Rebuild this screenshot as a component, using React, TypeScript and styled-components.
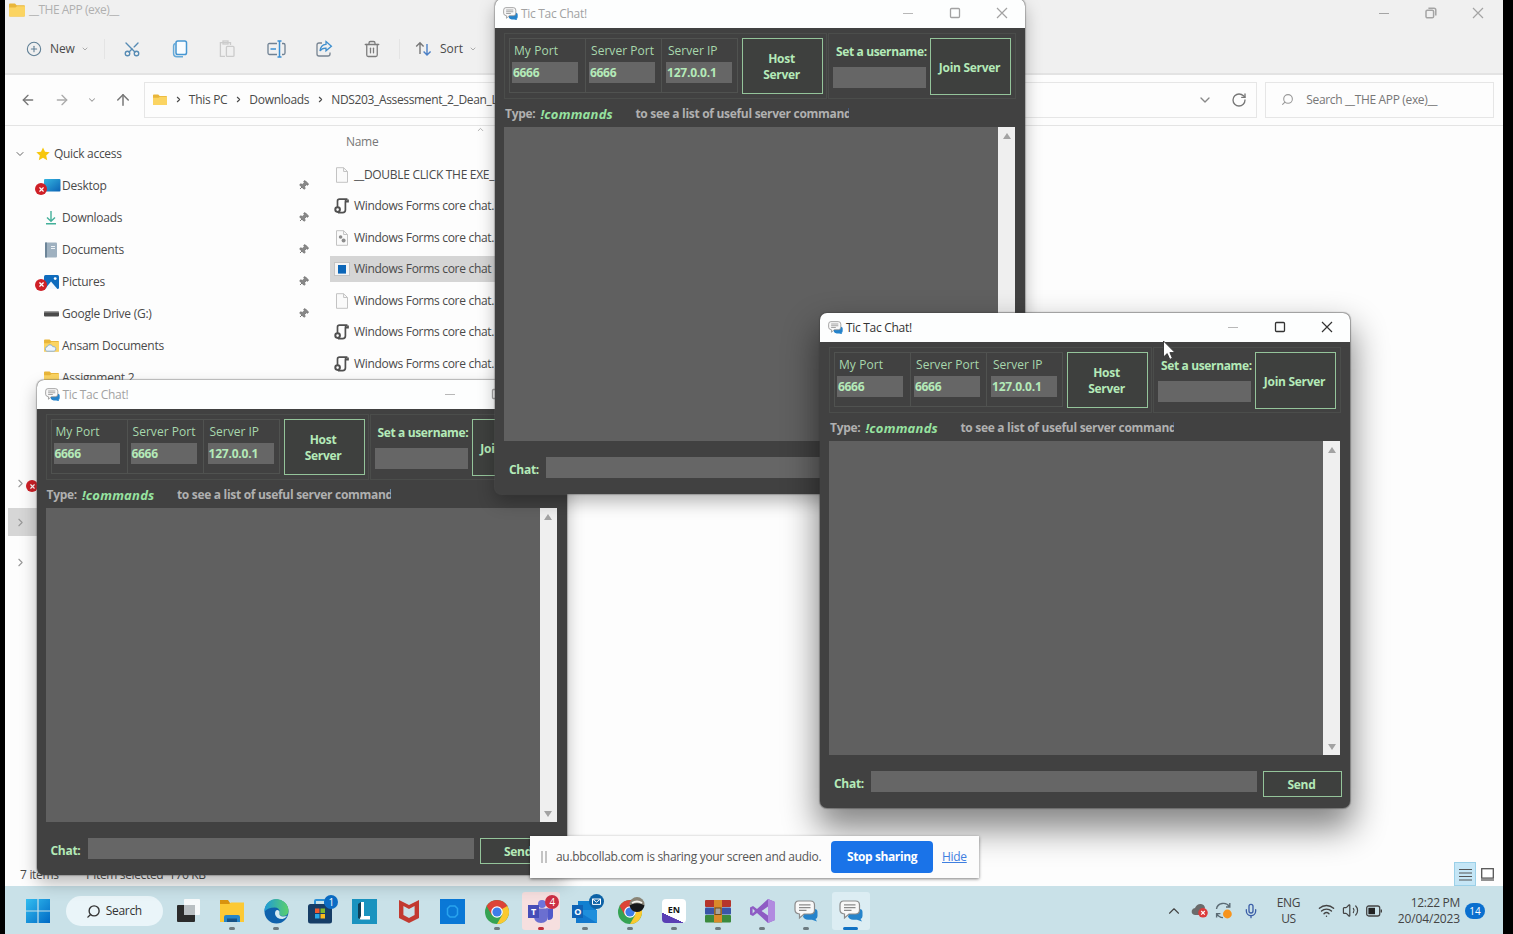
import React from 'react';
import styled, { createGlobalStyle, css } from 'styled-components';
import {
  ArrowLeft, ArrowRight, ArrowUp, ChevronDown, ChevronRight, ChevronUp, CirclePlus, Scissors,
  Trash2, RotateCw, Search, Mic, Wifi, Volume2, X, Pin,
} from 'lucide-react';

const Global = createGlobalStyle`
  *, *::before, *::after { box-sizing: border-box; }
  html, body { margin: 0; padding: 0; overflow: hidden; }
  body { font-family: "Open Sans", "Noto Sans", sans-serif; font-size: 12px; color: #4a4a4a; }
  svg { display: block; flex: none; }
`;

const Screen = styled.div`
  position: relative;
  width: 1513px;
  height: 934px;
  overflow: hidden;
  background: #000;
  padding: 0 10px 0 5px;
  display: flex;
  flex-direction: column;
`;

const Text = styled.span<{ $ls?: number; $size?: number; $color?: string; $bold?: boolean; $italic?: boolean }>`
  white-space: pre;
  line-height: 16px;
  letter-spacing: ${p => p.$ls ?? -0.3}px;
  font-size: ${p => p.$size ?? 12}px;
  font-weight: ${p => (p.$bold ? 700 : 400)};
  font-style: ${p => (p.$italic ? 'italic' : 'normal')};
  ${p => p.$color && css`color: ${p.$color};`}
`;

/* ---------- File explorer ---------- */

const Explorer = styled.section`
  flex: 1;
  min-height: 0;
  background: #fdfdfd;
  display: flex;
  flex-direction: column;
`;

const ExplorerTop = styled.header`
  height: 75px;
  background: #f0f0f0;
  border-bottom: 2px solid #e3e3e3;
  display: flex;
  flex-direction: column;
`;

const ExplorerTitle = styled.div`
  height: 24px;
  display: flex;
  align-items: center;
  padding: 0 19px 4px 4px;
  gap: 4px;
`;

const Caption = styled.div`
  margin-left: auto;
  display: flex;
  align-items: center;
  gap: 35px;
  padding-top: 5px;
`;

const CaptionMark = styled.div`
  color: #a4a4a4;
`;

const Toolbar = styled.div`
  height: 49px;
  display: flex;
  align-items: center;
  padding-left: 21px;
`;

const ToolItem = styled.div<{ $w: number; $ml?: number }>`
  width: ${p => p.$w}px;
  margin-left: ${p => p.$ml ?? 0}px;
  display: flex;
  align-items: center;
`;

const Divider = styled.div`
  width: 1px;
  height: 20px;
  background: #e4e4e4;
`;

const UprightScissors = styled(Scissors)`
  transform: rotate(-90deg);
`;

const MirroredSearch = styled(Search)`
  transform: scaleX(-1);
`;

const AddressRow = styled.div`
  height: 51px;
  border-bottom: 1px solid #e4e4e4;
  display: flex;
  align-items: center;
  padding: 0 9px 1px 15px;
`;

const NavItem = styled.div<{ $w: number }>`
  width: ${p => p.$w}px;
  display: flex;
`;

const AddressBox = styled.div`
  width: 1115px;
  height: 36px;
  border: 1px solid #e6e6e6;
  display: flex;
  align-items: center;
  padding: 0 9px 0 8px;
`;

const Crumb = styled.div<{ $ml: number }>`
  margin-left: ${p => p.$ml}px;
  display: flex;
`;

const AddressTools = styled.div`
  margin-left: auto;
  display: flex;
  align-items: center;
  gap: 18px;
`;

const SearchBox = styled.div`
  margin-left: 8px;
  width: 229px;
  height: 36px;
  border: 1px solid #e6e6e6;
  display: flex;
  align-items: center;
  padding-left: 15px;
  gap: 12px;
`;

const Main = styled.div`
  flex: 1;
  min-height: 0;
  display: flex;
`;

const Sidebar = styled.nav`
  width: 325px;
  padding-top: 11px;
  display: flex;
  flex-direction: column;
`;

const SideRow = styled.div<{ $indent: number }>`
  height: 32px;
  flex: none;
  display: flex;
  align-items: center;
  padding: 1px 21px 0 ${p => p.$indent}px;
`;

const SideIcon = styled.div`
  position: relative;
  width: 18px;
`;

const ErrorDot = styled.i`
  position: absolute;
  left: -9px;
  top: 4px;
  width: 12px;
  height: 12px;
  border-radius: 50%;
  background: #cf2027;
  display: flex;
  align-items: center;
  justify-content: center;
  color: #fff;
`;

const PinSlot = styled.div`
  margin-left: auto;
  transform: rotate(45deg);
  color: #777;
`;

const TreeRow = styled.div<{ $mt: number; $active?: boolean }>`
  position: relative;
  flex: none;
  height: 28px;
  margin: ${p => p.$mt}px 0 0 3px;
  padding-left: 6px;
  display: flex;
  align-items: center;
  color: #999;
  background: ${p => (p.$active ? '#d6d6d6' : 'transparent')};
`;

const TreeError = styled(ErrorDot)`
  left: 18px;
  top: 11px;
`;

const FileList = styled.div`
  width: 400px;
  display: flex;
  flex-direction: column;
`;

const ColumnHead = styled.div`
  height: 36px;
  padding: 8px 0 0 16px;
  display: flex;
  color: #777;
`;

const SortMark = styled.div`
  margin: -9px 0 0 98px;
  color: #999;
`;

const FileRow = styled.div<{ $active?: boolean }>`
  height: 26px;
  margin-bottom: 5.45px;
  flex: none;
  display: flex;
  align-items: center;
  gap: 4px;
  padding-left: 4px;
  background: ${p => (p.$active ? '#d5d5d5' : 'transparent')};
`;

const StatusBar = styled.footer`
  height: 24px;
  display: flex;
  align-items: center;
  padding: 2px 9px 0 15px;
`;

const ViewButtons = styled.div`
  margin: -2px 0 0 auto;
  display: flex;
  align-items: center;
  gap: 5px;
`;

const ViewActive = styled.div`
  width: 22px;
  height: 24px;
  border: 1px solid #9bd0e8;
  background: #c5e6f6;
  display: flex;
  align-items: center;
  justify-content: center;
`;

/* ---------- Chat windows ---------- */

const WindowFrame = styled.section<{ $x: number; $y: number; $active?: boolean }>`
  position: absolute;
  left: ${p => p.$x}px;
  top: ${p => p.$y}px;
  width: 530px;
  height: 495px;
  border-radius: 7px;
  overflow: hidden;
  background: #414141;
  display: flex;
  flex-direction: column;
  box-shadow: ${p => (p.$active
    ? '0 0 1px 1px rgba(60,60,60,.45), 0 18px 34px 3px rgba(0,0,0,.48)'
    : '0 0 1px 1px rgba(90,90,90,.4), 0 8px 17px rgba(0,0,0,.28)')};
`;

const TitleBar = styled.header<{ $active?: boolean }>`
  height: 29px;
  flex: none;
  background: #fdfefe;
  display: flex;
  align-items: center;
  padding: 0 17px 0 8px;
  gap: 3px;
  color: ${p => (p.$active ? '#333' : '#a2a2a2')};
`;

const TitleButtons = styled.div`
  margin-left: auto;
  padding-bottom: 1px;
  display: flex;
  align-items: center;
  gap: 35px;
`;

const Groups = styled.div`
  height: 66px;
  margin: 5px 9px 0;
  display: flex;
  gap: 1px;
`;

const Group = styled.div<{ $w: number }>`
  width: ${p => p.$w}px;
  flex: none;
  border: 1px solid #4b4d4b;
  padding: 4px 0 4px 4px;
  display: flex;
`;

const Cell = styled.div<{ $pl: number; $last?: boolean }>`
  width: ${p => (p.$last ? 77 : 76)}px;
  flex: none;
  height: 55px;
  border: 1px solid #505250;
  border-right-width: ${p => (p.$last ? 1 : 0)}px;
  padding: 4px 0 0 ${p => p.$pl}px;
  display: flex;
  flex-direction: column;
  color: #a8d8ad;
`;

const Field = styled.div<{ $w: number }>`
  width: ${p => p.$w}px;
  height: 21px;
  background: #666;
  display: flex;
  align-items: center;
  padding-left: 1px;
  color: #b4eab8;
`;

const PortField = styled(Field)`
  margin: 3px 0 0 -2px;
`;

const OutlineButton = styled.div<{ $w: number; $h: number }>`
  width: ${p => p.$w}px;
  height: ${p => p.$h}px;
  flex: none;
  border: 1px solid #94c49a;
  display: flex;
  flex-direction: column;
  align-items: center;
  justify-content: center;
  padding: 1px 2px 0 0;
  color: #b4eab8;
  background: #3e403e;
`;

const JoinButton = styled(OutlineButton)`
  padding-top: 3px;
`;

const HostSlot = styled.div`
  margin-left: 4px;
`;

const UserColumn = styled.div`
  width: 97px;
  flex: none;
  padding-top: 6px;
  display: flex;
  flex-direction: column;
  color: #b4eab8;
`;

const UserField = styled(Field)`
  margin-top: 7px;
`;

const UserLabel = styled.div`
  height: 16px;
  padding-left: 3px;
  display: flex;
`;

const HintRow = styled.div`
  height: 28px;
  padding: 7px 0 0 10px;
  display: flex;
  color: #b0b0b0;
`;

const HintCommand = styled.div`
  margin-left: 5px;
  width: 95px;
  display: flex;
  color: #97e3a0;
`;

const HintClip = styled.div`
  width: 214px;
  height: 18px;
  overflow: hidden;
  display: flex;
`;

const Log = styled.div`
  height: 314px;
  margin: 0 10px 0 9px;
  background: #606060;
  display: flex;
  justify-content: flex-end;
`;

const ScrollTrack = styled.div`
  width: 17px;
  background: #efefef;
  display: flex;
  flex-direction: column;
  align-items: center;
  justify-content: space-between;
  padding: 6px 0 5px;
`;

const ChatRow = styled.div`
  height: 26px;
  margin: 16px 0 0 14px;
  display: flex;
  color: #b4eab8;
`;

const ChatLabel = styled.div`
  width: 37px;
  padding-top: 5px;
  display: flex;
`;

const SendSlot = styled.div`
  margin-left: 6px;
`;

const MouseSlot = styled.div`
  position: absolute;
  left: 1162px;
  top: 340px;
`;

/* ---------- Sharing bar ---------- */

const ShareBar = styled.aside`
  position: absolute;
  left: 530px;
  top: 836px;
  width: 449px;
  height: 42px;
  background: #fcfcfc;
  box-shadow: 0 1px 3px rgba(0, 0, 0, 0.5);
  display: flex;
  align-items: center;
  padding-left: 11px;
`;

const Grip = styled.div`
  width: 6px;
  height: 12px;
  margin-right: 9px;
  border: solid #c4c4c4;
  border-width: 0 2px;
`;

const ShareText = styled.div`
  width: 275px;
  display: flex;
  color: #555;
`;

const StopButton = styled.div`
  width: 102px;
  height: 32px;
  border-radius: 4px;
  background: #1a73e8;
  color: #fff;
  display: flex;
  align-items: center;
  justify-content: center;
`;

const HideLink = styled.div`
  margin-left: 9px;
  display: flex;
  color: #3f7fe0;
  text-decoration: underline;
`;

/* ---------- Taskbar ---------- */

const Taskbar = styled.footer`
  height: 48px;
  flex: none;
  background: #c9e1e8;
  display: flex;
  align-items: center;
  padding: 0 18px 0 11px;
`;

const TaskItem = styled.div`
  position: relative;
  width: 44.2px;
  height: 48px;
  display: flex;
  align-items: center;
  justify-content: center;
  padding-top: 2px;
`;

const TaskTile = styled.div<{ $bg?: string }>`
  width: 38px;
  height: 38px;
  border-radius: 3px;
  background: ${p => p.$bg ?? 'transparent'};
  display: flex;
  align-items: center;
  justify-content: center;
`;

const Running = styled.i<{ $color?: string; $w?: number }>`
  position: absolute;
  bottom: 4px;
  left: calc(50% - ${p => (p.$w ?? 6) / 2}px);
  width: ${p => p.$w ?? 6}px;
  height: 3px;
  border-radius: 2px;
  background: ${p => p.$color ?? '#6d7b80'};
`;

const TaskBadge = styled.b<{ $bg: string }>`
  position: absolute;
  right: 4px;
  top: 9px;
  width: 14px;
  height: 14px;
  border-radius: 50%;
  background: ${p => p.$bg};
  color: #fff;
  font-size: 10px;
  font-weight: 400;
  line-height: 14px;
  text-align: center;
`;

const SearchPill = styled.div`
  width: 97px;
  height: 30px;
  margin: 2px 3px 0 5.5px;
  border-radius: 15px;
  background: #eaf5f9;
  display: flex;
  align-items: center;
  padding-left: 20px;
  gap: 5px;
  color: #333;
`;

const Tray = styled.div`
  margin-left: auto;
  display: flex;
  align-items: center;
  padding-top: 1px;
  color: #444;
`;

const TrayItem = styled.div<{ $w: number }>`
  width: ${p => p.$w}px;
  display: flex;
`;

const Stack = styled.div<{ $w: number; $align: string; $ml?: number }>`
  width: ${p => p.$w}px;
  margin-left: ${p => p.$ml ?? 0}px;
  display: flex;
  flex-direction: column;
  align-items: ${p => p.$align};
`;

const CountDot = styled.div`
  width: 20px;
  height: 16px;
  margin-left: 5px;
  border-radius: 8px;
  background: #0a6fcf;
  color: #fff;
  font-size: 10px;
  line-height: 16px;
  text-align: center;
`;

/* ---------- Drawings ---------- */

const Folder = ({ w = 16, cloud = false }: { w?: number; cloud?: boolean }) => (
  <svg width={w} height={w * 0.85} viewBox="0 0 16 13.6">
    <path d="M0 1.5Q0 .5 1 .5H6L7.6 2.2H15Q16 2.2 16 3.2V12.4Q16 13.4 15 13.4H1Q0 13.4 0 12.4Z" fill="#e9b63a" />
    <path d="M0 4.4H6.4L8 3.2H16V12.4Q16 13.4 15 13.4H1Q0 13.4 0 12.4Z" fill="#fbd462" />
    {cloud && <path d="M3 13a2.5 2.5 0 0 1 .4-4.8 3.2 3.2 0 0 1 6 0 2.4 2.4 0 0 1 1.4 4.8Z" fill="#eef4fb" stroke="#7aa7d8" strokeWidth=".9" />}
  </svg>
);

const ChatIcon = ({ size = 15 }: { size?: number }) => (
  <svg width={size} height={size * 0.9} viewBox="0 0 24 21.6">
    <path d="M12 9h8.5q3 0 3 3v4q0 2.4-2 3l1.5 2.4-5-1.6h-4q-4-.4-5-3.4z" fill="#2583cb" />
    <path d="M4.5 1H16.5q4 0 4 4v5q0 4-4 4H10l-4.500 4V14q-4.500-.5-4.500-4V5q0-4 3.500-4Z" fill="#f8f8f8" stroke="#8b8b8b" strokeWidth="1.2" />
    <path d="M5 4.8H16.5M5 7.6H16.5M5 10.4H12.5" stroke="#8a8a8a" strokeWidth="1.2" />
  </svg>
);

const MinMark = ({ light }: { light?: boolean }) => (
  <svg width="12" height="12" viewBox="0 0 12 12"><path d="M1 6.5H11" stroke={light ? '#b8b8b8' : 'currentColor'} /></svg>
);
const MaxMark = () => (
  <svg width="12" height="12" viewBox="0 0 12 12"><rect x="1.5" y="1.5" width="9" height="9" rx="1" fill="none" stroke="currentColor" strokeWidth="1.3" /></svg>
);
const CloseMark = () => (
  <svg width="12" height="12" viewBox="0 0 12 12"><path d="M1 1L11 11M11 1L1 11" stroke="currentColor" strokeWidth="1.2" /></svg>
);
const RestoreMark = () => (
  <svg width="12" height="12" viewBox="0 0 12 12" fill="none" stroke="currentColor" strokeWidth="1.5"><rect x="1" y="3.2" width="7.6" height="7.6" rx="1.4" /><path d="M3.4 1.2H9q1.8 0 1.8 1.8V8.6" /></svg>
);

const CopyIcon = () => (
  <svg width="16" height="18" viewBox="0 0 16 18" fill="none" stroke="#4596d2" strokeWidth="1.5"><rect x="4" y="1" width="10.5" height="13.5" rx="1.8" fill="#f8fcff" /><path d="M4 3.4Q1.6 3.6 1.6 6V13.6Q1.6 16.8 5 16.8H11" stroke="#65a9d8" /></svg>
);
const PasteIcon = () => (
  <svg width="16" height="18" viewBox="0 0 16 18" fill="none" stroke="#cbcbcb" strokeWidth="1.3"><path d="M6 16.3H1.4V2.6H11.5V5" /><rect x="4" y="1" width="5" height="3" /><rect x="7.4" y="6.4" width="7.6" height="10" rx="1" /></svg>
);
const RenameIcon = () => (
  <svg width="19" height="18" viewBox="0 0 19 18" fill="none" stroke="#6f8193" strokeWidth="1.3"><path d="M10 3.5H2.5Q1 3.5 1 5V13Q1 14.5 2.5 14.5H10M15 3.5H16.5Q18 3.5 18 5V13Q18 14.5 16.5 14.5H15" /><path d="M3.5 9H9M12.5 1V17M10.5 1H14.5M10.5 17H14.5" stroke="#3b8fd2" strokeWidth="1.5" /></svg>
);
const ShareIcon = () => (
  <svg width="18" height="18" viewBox="0 0 18 18" fill="none" strokeWidth="1.3"><path d="M7 3H4Q2 3 2 5V14Q2 16 4 16H13Q15 16 15 14V12.5" stroke="#778491" /><path d="M11 1.6L16.4 6.2L11 10.8V8.2Q7 8 5 11Q5.6 4.8 11 4.4Z" stroke="#3f8fce" /></svg>
);
const SortIcon = () => (
  <svg width="17" height="16" viewBox="0 0 17 16" fill="none" strokeWidth="1.4"><path d="M5 13V2M1.2 5.6L5 1.8L8.6 5.6" stroke="#777" /><path d="M12 3V14M8.6 10.4L12 14L15.6 10.4" stroke="#4c80c6" /></svg>
);

const DesktopIcon = () => (<svg width="17" height="13" viewBox="0 0 17 13"><defs><linearGradient id="dk" x1="0" x2="1" y2="1"><stop stopColor="#35b6e0" /><stop offset="1" stopColor="#0b62b5" /></linearGradient></defs><rect width="16.5" height="12.5" rx="1" fill="url(#dk)" /></svg>);
const DownloadIcon = () => (<svg width="14" height="15" viewBox="0 0 14 15" fill="none" stroke="#44b09a" strokeWidth="1.4"><path d="M7 1V11M3 7.4L7 11.2L11 7.4M2 13.7H12" /></svg>);
const DocumentIcon = () => (<svg width="14" height="16" viewBox="0 0 14 16"><rect x="1" y=".5" width="12" height="15" rx="1" fill="#9fb1c0" /><path d="M2 .5V15.5" stroke="#6d8598" strokeWidth="2" /><path d="M7 4.5H11M7 6.5H11" stroke="#eef3f7" /></svg>);
const PictureIcon = () => (<svg width="15" height="14" viewBox="0 0 15 14"><rect width="15" height="14" rx="1.5" fill="#0f6cbd" /><path d="M1 14L7 6.6L13.4 14Z" fill="#f2f8fd" /><circle cx="11.2" cy="3.6" r="1.4" fill="#fff" /></svg>);
const DriveIcon = () => (<svg width="15" height="6" viewBox="0 0 15 6"><rect y=".5" width="15" height="5" rx="1" fill="#4b4b4b" /><path d="M0 1H15" stroke="#999" /></svg>);
const StarIcon = () => (<svg width="14" height="14" viewBox="0 0 14 14"><path d="M7 .4L9 4.8L13.7 5.3L10.2 8.5L11.2 13.3L7 10.8L2.8 13.3L3.8 8.5L.3 5.3L5 4.8Z" fill="#f7c70d" /></svg>);

const PageIcon = ({ cog = false }: { cog?: boolean }) => (
  <svg width="16" height="16" viewBox="0 0 16 16"><path d="M2.5.7H9.6L13.5 4.5V15.3H2.5Z" fill="#fafafa" stroke="#c3c3c3" /><path d="M9.6.7V4.5H13.5" fill="none" stroke="#c3c3c3" />{cog && <g fill="#8c8c8c"><circle cx="6.6" cy="7" r="1.8" /><circle cx="9.6" cy="10.4" r="2" /></g>}</svg>
);
const ScriptIcon = () => (
  <svg width="16" height="16" viewBox="0 0 16 16" fill="none" stroke="#505050" strokeWidth="1.7"><path d="M3.5 9V3Q3.5 1.2 5.5 1.2H13.4Q11.4 1.6 11.4 4V12Q11.4 14.6 8.6 14.6H4" /><path d="M11.4 3.6H14V1.6" /><circle cx="3.6" cy="11.6" r="2.3" strokeWidth="2" /></svg>
);
const ExeIcon = () => (<svg width="16" height="16" viewBox="0 0 16 16"><rect x=".5" y="1.5" width="15" height="13" fill="#f4f4f4" stroke="#c4c4c4" /><rect x="4" y="4" width="8" height="8.6" fill="#0c66b8" /></svg>);

const WindowsLogo = () => (<svg width="24" height="24" viewBox="0 0 24 24"><defs><linearGradient id="wl" x1="0" x2="1" y2="1"><stop stopColor="#32bdf0" /><stop offset="1" stopColor="#0069c4" /></linearGradient></defs><path d="M0 0H11.4V11.4H0ZM12.6 0H24V11.4H12.6ZM0 12.6H11.4V24H0ZM12.6 12.6H24V24H12.6Z" fill="url(#wl)" /></svg>);
const TaskViewIcon = () => (<svg width="24" height="24" viewBox="0 0 24 24"><rect x="8" y="0" width="16" height="16" rx="1" fill="#f7fafb" /><rect x="1" y="6" width="18" height="17" rx="1" fill="#2b2b2b" /><rect x="8" y="6" width="11" height="10" fill="#b9bfc2" /></svg>);
const ExplorerIcon = () => (<svg width="26" height="24" viewBox="0 0 26 24"><path d="M1 1H9L11 4H24V8H1Z" fill="#d9930f" /><path d="M1 5H10L12 3.6H25V23H1Z" fill="#fcc935" /><path d="M5 23V18Q5 16 7 16H19Q21 16 21 18V23Z" fill="#2585c8" /><path d="M8 19.5H18V23H8Z" fill="#155387" /></svg>);
const EdgeIcon = () => (<svg width="25" height="25" viewBox="0 0 25 25"><defs><linearGradient id="eg" x1="0" x2="1"><stop stopColor="#1f9ad8" /><stop offset="1" stopColor="#5ad06b" /></linearGradient></defs><circle cx="12.5" cy="12.5" r="12" fill="#0f62ac" /><path d="M.5 12.5A12 12 0 0 1 24.5 11.5Q24.5 17 18.5 17Q14.6 17 15.6 13.5Q16 8.6 10.6 8.4Q4 8.4 .5 12.5Z" fill="url(#eg)" /><path d="M11 15Q11 11 13.5 11Q16 11.5 15.4 14Q15 17.2 19 17.6Q22 17.6 23.4 16.6Q21.5 19.6 18.5 20Q12 20 11 15Z" fill="#d6ebf2" /></svg>);
const StoreIcon = () => (<svg width="24" height="25" viewBox="0 0 24 25"><path d="M7 6V2Q7 1 8 1H16Q17 1 17 2V6" fill="none" stroke="#2d92d8" strokeWidth="2" /><rect y="5" width="24" height="19.5" rx="2.5" fill="#163d66" /><path d="M7 9.5H11.5V14H7Z" fill="#ef5b30" /><path d="M12.5 9.5H17V14H12.5Z" fill="#80ba2c" /><path d="M7 15H11.5V19.5H7Z" fill="#26a8e8" /><path d="M12.5 15H17V19.5H12.5Z" fill="#fbbb1c" /></svg>);
const LIcon = () => (<svg width="25" height="25" viewBox="0 0 25 25"><rect width="25" height="25" fill="#1a93bf" /><path d="M6 5L9 3V21L6 19Z" fill="#0e3f57" /><path d="M9 3H12V17H18V20.5H7.5L9 17Z" fill="#fff" /></svg>);
const ShieldIcon = () => (<svg width="22" height="25" viewBox="0 0 22 25"><path d="M1 1L11 6L21 1V19L11 24L1 19ZM5.4 7V16L11 19L16.6 16V7L11 10Z" fill="#c23a30" fillRule="evenodd" /></svg>);
const OutlineO = () => (<svg width="25" height="25" viewBox="0 0 25 25"><rect width="25" height="25" fill="#0a78d6" /><path d="M10 7H15L17.5 9.5V15.5L15 18H10L7.5 15.5V9.5Z" fill="none" stroke="#29a4ee" strokeWidth="1.5" /></svg>);
const ChromeIcon = ({ avatar = false }: { avatar?: boolean }) => (
  <svg width="30" height="28" viewBox="-3 -3 30 28"><circle cx="12" cy="12" r="12" fill="#35a353" /><path d="M1.6 6A12 12 0 0 1 22.4 6L12 12L6.8 15Z" fill="#dc4437" /><path d="M22.4 6A12 12 0 0 1 12 24L17.2 15V6Z" fill="#fbc92f" /><path d="M12 6H22.4L17 9Z" fill="#dc4437" /><circle cx="12" cy="12" r="5.8" fill="#fff" /><circle cx="12" cy="12" r="4.6" fill="#3d7de8" />{avatar && <g><circle cx="19" cy="4.5" r="7.5" fill="#8a8577" /><path d="M11.5 5.5Q19 1 26.5 5.5Q25 11.5 19 12Q13 11.5 11.5 5.5Z" fill="#16181a" /><path d="M14 3Q19 0 24 3" stroke="#f3f3ee" strokeWidth="2" fill="none" /></g>}</svg>
);
const TileLetter = styled.span<{ $bg: string }>`
  position: absolute;
  left: 9px;
  top: 19px;
  width: 11px;
  height: 13px;
  background: ${p => p.$bg};
  color: #fff;
  font: 700 9px/13px "Open Sans", sans-serif;
  text-align: center;
`;
const TeamsIcon = () => (<svg width="26" height="25" viewBox="0 0 26 25"><circle cx="14" cy="5" r="4" fill="#6d74dc" /><circle cx="22" cy="6" r="2.8" fill="#5059c9" /><path d="M18 9.5H25V17Q25 21 20 21Z" fill="#5059c9" /><path d="M6 9.5H20V17Q20 24 13 24Q6 24 6 17Z" fill="#6b6fd0" /></svg>);
const OutlookIcon = () => (<svg width="26" height="25" viewBox="0 0 26 25"><path d="M6 2H24V14H6Z" fill="#1080d0" /><path d="M4 11H25V24H4Z" fill="#1e8fdc" /><path d="M4 11L25 24H4Z" fill="#1279cd" /></svg>);
const MailMark = () => (<svg width="15" height="15" viewBox="0 0 15 15"><circle cx="7.5" cy="7.5" r="7.5" fill="#0d62a6" /><path d="M3.5 5H11.5V10.4H3.5ZM3.5 5L7.5 8.2L11.5 5" fill="none" stroke="#fff" /></svg>);
const MailSlot = styled.div`
  position: absolute;
  right: 4px;
  top: 8px;
`;
const EnTile = styled.div`
  width: 24px;
  height: 24px;
  border-radius: 4px;
  background: linear-gradient(205deg, #fff 70%, #5a3fb4 71%);
  font: 700 9px/21px "Open Sans", sans-serif;
  color: #151515;
  text-align: center;
`;
const RarIcon = () => (<svg width="26" height="23" viewBox="0 0 26 23"><rect y="0" width="26" height="7" rx="1" fill="#b5352c" /><rect y="7.5" width="26" height="7" rx="1" fill="#3a55a8" /><rect y="15" width="26" height="7.5" rx="1" fill="#3b8a3d" /><rect x="9" width="8" height="22.5" fill="#d98a2b" /><rect x="10" y="8" width="6" height="6.5" fill="#a9a39a" stroke="#6d4a1a" /></svg>);
const VsIcon = () => (<svg width="25" height="24" viewBox="0 0 25 24"><path d="M18 0L25 3V21L18 24L7 14L3 17L0 15.5V8.5L3 7L7 10ZM18 7.4L11.6 12L18 16.6ZM2.6 9.6V14.4L5 12Z" fill="#8e5cc4" fillRule="evenodd" /><path d="M18 0L25 3V21L18 24Z" fill="#b18ae0" /></svg>);
const BatteryIcon = () => (<svg width="17" height="12" viewBox="0 0 17 12"><rect x=".7" y="1" width="13" height="10" rx="2" fill="none" stroke="#444" strokeWidth="1.3" /><rect x="2.4" y="2.8" width="6.6" height="6.4" fill="#222" /><path d="M14.6 4.4H16V7.6H14.6Z" fill="#444" /></svg>);
const CloudError = () => (<svg width="18" height="15" viewBox="0 0 18 15"><path d="M4 12Q0 11.6 .8 7.6Q1.6 5 4 5Q6 .6 10 1Q13.6 1.6 14 5L8 12Z" fill="#6b6b6b" /><circle cx="12" cy="9.8" r="4.8" fill="#dc3b3b" /><path d="M10.2 8L13.8 11.6M13.8 8L10.2 11.6" stroke="#fff" strokeWidth="1.2" /></svg>);
const SyncIcon = () => (<svg width="18" height="17" viewBox="0 0 18 17"><path d="M1.5 7A7 6.4 0 0 1 14.5 4.6M14.8 1V5H11M1.6 15.6V11.6H5.4M2 12A7 6 0 0 0 8 15.6" fill="none" stroke="#5b6b74" strokeWidth="1.4" /><circle cx="12.4" cy="12" r="4.4" fill="#f7941d" /></svg>);

/* ---------- Parts ---------- */

function ChatWindow({ x, y, active }: { x: number; y: number; active?: boolean }) {
  return (
    <WindowFrame $x={x} $y={y} $active={active}>
      <TitleBar $active={active}>
        <ChatIcon />
        <Text>Tic Tac Chat!</Text>
        <TitleButtons><MinMark light /><MaxMark /><CloseMark /></TitleButtons>
      </TitleBar>
      <Groups>
        <Group $w={323}>
          <Cell $pl={4}><Text $ls={0.08}>My Port</Text><PortField $w={66}><Text $bold>6666</Text></PortField></Cell>
          <Cell $pl={5}><Text $ls={0.05}>Server Port</Text><PortField $w={66}><Text $bold>6666</Text></PortField></Cell>
          <Cell $pl={6} $last><Text $ls={0}>Server IP</Text><PortField $w={66}><Text $bold $ls={-0.2}>127.0.0.1</Text></PortField></Cell>
          <HostSlot>
            <OutlineButton $w={81} $h={56}><Text $bold>Host</Text><Text $bold>Server</Text></OutlineButton>
          </HostSlot>
        </Group>
        <Group $w={188}>
          <UserColumn>
            <UserLabel><Text $bold $ls={-0.36}>Set a username:</Text></UserLabel>
            <UserField $w={93} />
          </UserColumn>
          <JoinButton $w={81} $h={57}><Text $bold>Join Server</Text></JoinButton>
        </Group>
      </Groups>
      <HintRow>
        <Text $bold>Type:</Text>
        <HintCommand><Text $bold $italic $size={13} $ls={0.22}>!commands</Text></HintCommand>
        <HintClip><Text $bold>to see a list of useful server command</Text></HintClip>
      </HintRow>
      <Log>
        <ScrollTrack>
          <svg width="8" height="6" viewBox="0 0 8 6"><path d="M0 6L4 0L8 6Z" fill="#a3a3a3" /></svg>
          <svg width="8" height="6" viewBox="0 0 8 6"><path d="M0 0L4 6L8 0Z" fill="#a3a3a3" /></svg>
        </ScrollTrack>
      </Log>
      <ChatRow>
        <ChatLabel><Text $bold>Chat:</Text></ChatLabel>
        <Field $w={386} />
        <SendSlot><OutlineButton $w={79} $h={26}><Text $bold>Send</Text></OutlineButton></SendSlot>
      </ChatRow>
    </WindowFrame>
  );
}

const places: { name: string; icon: React.ReactNode; pin?: boolean; error?: boolean }[] = [
  { name: 'Desktop', icon: <DesktopIcon />, pin: true, error: true },
  { name: 'Downloads', icon: <DownloadIcon />, pin: true },
  { name: 'Documents', icon: <DocumentIcon />, pin: true },
  { name: 'Pictures', icon: <PictureIcon />, pin: true, error: true },
  { name: 'Google Drive (G:)', icon: <DriveIcon />, pin: true },
  { name: 'Ansam Documents', icon: <Folder w={15} cloud /> },
  { name: 'Assignment 2', icon: <Folder w={15} /> },
];

const files: { name: string; icon: React.ReactNode; active?: boolean }[] = [
  { name: '__DOUBLE CLICK THE EXE_', icon: <PageIcon /> },
  { name: 'Windows Forms core chat.', icon: <ScriptIcon /> },
  { name: 'Windows Forms core chat.', icon: <PageIcon cog /> },
  { name: 'Windows Forms core chat', icon: <ExeIcon />, active: true },
  { name: 'Windows Forms core chat.', icon: <PageIcon /> },
  { name: 'Windows Forms core chat.', icon: <ScriptIcon /> },
  { name: 'Windows Forms core chat.', icon: <ScriptIcon /> },
];

const ErrorBadge = () => <ErrorDot><X size={7} strokeWidth={4} /></ErrorDot>;

export default function App() {
  return (
    <Screen>
      <Global />
      <Explorer>
        <ExplorerTop>
          <ExplorerTitle>
            <Folder />
            <Text $color="#b0b0b0" $ls={-0.5}>__THE APP (exe)__</Text>
            <Caption>
              <CaptionMark><MinMark /></CaptionMark>
              <CaptionMark><RestoreMark /></CaptionMark>
              <CaptionMark><CloseMark /></CaptionMark>
            </Caption>
          </ExplorerTitle>
          <Toolbar>
            <ToolItem $w={24}><CirclePlus size={16} strokeWidth={1.6} color="#5f7f95" /></ToolItem>
            <ToolItem $w={31}><Text $ls={-0.1}>New</Text></ToolItem>
            <ToolItem $w={23}><ChevronDown size={8} color="#888" /></ToolItem>
            <Divider />
            <ToolItem $w={49} $ml={18}><UprightScissors size={18} strokeWidth={1.8} color="#568bb4" /></ToolItem>
            <ToolItem $w={47}><CopyIcon /></ToolItem>
            <ToolItem $w={48}><PasteIcon /></ToolItem>
            <ToolItem $w={48}><RenameIcon /></ToolItem>
            <ToolItem $w={48}><ShareIcon /></ToolItem>
            <ToolItem $w={36}><Trash2 size={18} strokeWidth={1.7} color="#7b7b7b" /></ToolItem>
            <Divider />
            <ToolItem $w={25} $ml={15}><SortIcon /></ToolItem>
            <ToolItem $w={29}><Text $ls={0}>Sort</Text></ToolItem>
            <ChevronDown size={8} color="#888" />
          </Toolbar>
        </ExplorerTop>
        <AddressRow>
          <NavItem $w={34}><ArrowLeft size={16} color="#777" strokeWidth={2} /></NavItem>
          <NavItem $w={33}><ArrowRight size={16} color="#aaa" strokeWidth={2} /></NavItem>
          <NavItem $w={27}><ChevronDown size={10} color="#999" strokeWidth={2.5} /></NavItem>
          <NavItem $w={30}><ArrowUp size={18} color="#777" strokeWidth={2} /></NavItem>
          <AddressBox>
            <Folder w={14} />
            <Crumb $ml={7}><ChevronRight size={9} strokeWidth={3} /></Crumb>
            <Crumb $ml={6}><Text>This PC</Text></Crumb>
            <Crumb $ml={7}><ChevronRight size={9} strokeWidth={3} /></Crumb>
            <Crumb $ml={6}><Text>Downloads</Text></Crumb>
            <Crumb $ml={7}><ChevronRight size={9} strokeWidth={3} /></Crumb>
            <Crumb $ml={6}><Text $ls={-0.35}>NDS203_Assessment_2_Dean_L</Text></Crumb>
            <AddressTools><ChevronDown size={16} color="#888" /><RotateCw size={16} color="#777" /></AddressTools>
          </AddressBox>
          <SearchBox>
            <MirroredSearch size={13} color="#999" />
            <Text $color="#777" $ls={-0.35}>Search __THE APP (exe)__</Text>
          </SearchBox>
        </AddressRow>
        <Main>
          <Sidebar>
            <SideRow $indent={9}>
              <ToolItem $w={22}><ChevronDown size={12} color="#666" /></ToolItem>
              <ToolItem $w={18}><StarIcon /></ToolItem>
              <Text>Quick access</Text>
            </SideRow>
            {places.map(p => (
              <SideRow key={p.name} $indent={39}>
                <SideIcon>{p.icon}{p.error && <ErrorBadge />}</SideIcon>
                <Text $ls={-0.26}>{p.name}</Text>
                {p.pin && <PinSlot><Pin size={11} fill="#888" /></PinSlot>}
              </SideRow>
            ))}
            <TreeRow $mt={76}><ChevronRight size={13} /><TreeError><X size={7} strokeWidth={4} /></TreeError></TreeRow>
            <TreeRow $mt={11} $active><ChevronRight size={13} /></TreeRow>
            <TreeRow $mt={12}><ChevronRight size={13} /></TreeRow>
          </Sidebar>
          <FileList>
            <ColumnHead><Text>Name</Text><SortMark><ChevronUp size={9} /></SortMark></ColumnHead>
            {files.map((f, i) => (
              <FileRow key={i} $active={f.active}>{f.icon}<Text>{f.name}</Text></FileRow>
            ))}
          </FileList>
        </Main>
        <StatusBar>
          <ToolItem $w={64}><Text>7 items</Text></ToolItem>
          <Text $ls={-0.35}>1 item selected  176 KB</Text>
          <ViewButtons>
            <ViewActive><svg width="13" height="13" viewBox="0 0 13 13"><path d="M0 1.5H13M0 5H13M0 8.5H13M0 12H13" stroke="#555" strokeWidth="1.1" /></svg></ViewActive>
            <svg width="13" height="13" viewBox="0 0 13 13"><rect x=".7" y=".7" width="11.6" height="9.4" fill="#fff" stroke="#555" strokeWidth="1.3" /><path d="M0 12H13" stroke="#777" strokeWidth="1.6" /></svg>
          </ViewButtons>
        </StatusBar>
      </Explorer>

      <Taskbar>
        <TaskItem><WindowsLogo /></TaskItem>
        <SearchPill><MirroredSearch size={15} strokeWidth={2.2} /><Text>Search</Text></SearchPill>
        <TaskItem><TaskViewIcon /></TaskItem>
        <TaskItem><ExplorerIcon /><Running /></TaskItem>
        <TaskItem><EdgeIcon /><Running /></TaskItem>
        <TaskItem><StoreIcon /><TaskBadge $bg="#0b6cc4">1</TaskBadge></TaskItem>
        <TaskItem><LIcon /></TaskItem>
        <TaskItem><ShieldIcon /></TaskItem>
        <TaskItem><OutlineO /></TaskItem>
        <TaskItem><ChromeIcon /><Running /></TaskItem>
        <TaskItem><TaskTile $bg="#f6dfdf"><TeamsIcon /></TaskTile><TileLetter $bg="#464eb8">T</TileLetter><TaskBadge $bg="#cc2f43">4</TaskBadge><Running $color="#c0323c" /></TaskItem>
        <TaskItem><OutlookIcon /><TileLetter $bg="#0f63b5">O</TileLetter><MailSlot><MailMark /></MailSlot><Running /></TaskItem>
        <TaskItem><ChromeIcon avatar /><Running /></TaskItem>
        <TaskItem><EnTile>EN</EnTile><Running /></TaskItem>
        <TaskItem><RarIcon /><Running /></TaskItem>
        <TaskItem><VsIcon /><Running /></TaskItem>
        <TaskItem><ChatIcon size={24} /><Running /></TaskItem>
        <TaskItem><TaskTile $bg="#dcedf3"><ChatIcon size={24} /></TaskTile><Running $color="#1172c4" $w={15} /></TaskItem>
        <Tray>
          <TrayItem $w={26}><ChevronUp size={18} strokeWidth={1.5} /></TrayItem>
          <TrayItem $w={24}><CloudError /></TrayItem>
          <TrayItem $w={28}><SyncIcon /></TrayItem>
          <TrayItem $w={30}><Mic size={16} color="#3c5fa8" /></TrayItem>
          <Stack $w={31} $align="center"><Text>ENG</Text><Text>US</Text></Stack>
          <Stack $w={24} $ml={14} $align="flex-start"><Wifi size={17} /></Stack>
          <TrayItem $w={24}><Volume2 size={17} strokeWidth={1.7} /></TrayItem>
          <TrayItem $w={19}><BatteryIcon /></TrayItem>
          <Stack $w={75} $align="flex-end"><Text>12:22 PM</Text><Text $ls={-0.15}>20/04/2023</Text></Stack>
          <CountDot>14</CountDot>
        </Tray>
      </Taskbar>

      <ChatWindow x={36.5} y={380} />
      <ChatWindow x={495} y={-1} />
      <ChatWindow x={820} y={313} active />

      <ShareBar>
        <Grip />
        <ShareText><Text>au.bbcollab.com is sharing your screen and audio.</Text></ShareText>
        <StopButton><Text $bold $ls={-0.4}>Stop sharing</Text></StopButton>
        <HideLink><Text>Hide</Text></HideLink>
      </ShareBar>

      <MouseSlot>
        <svg width="14" height="21" viewBox="0 0 14 21"><path d="M1.5 1V17L5.2 13.6L7.8 19.4L10.4 18.2L7.9 12.6H13Z" fill="#fff" stroke="#333" strokeWidth=".9" /></svg>
      </MouseSlot>
    </Screen>
  );
}
